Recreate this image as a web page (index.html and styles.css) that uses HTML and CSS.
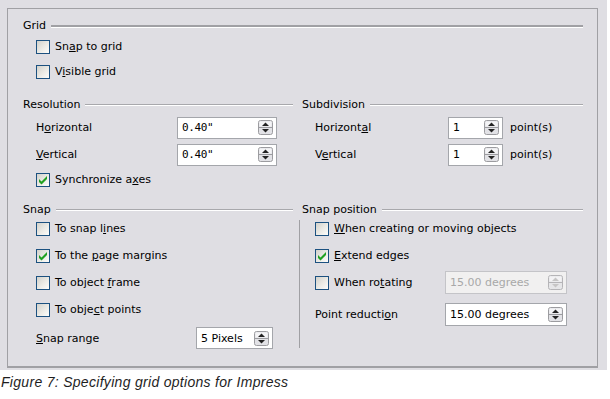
FILE: index.html
```html
<!DOCTYPE html>
<html lang="en">
<head>
  <meta charset="UTF-8">
  <title>Grid options</title>
  <link rel="stylesheet" href="styles.css">
</head>
<body>

  <!-- shared glyphs -->
  <svg class="defs" width="0" height="0">
    <symbol id="spin" viewBox="0 0 15 15">
      <rect x="0.5" y="0.5" width="14" height="14" rx="2" fill="#e2e2e6" stroke="#9c9ca0"/>
      <rect x="1.5" y="1.5" width="12" height="5" fill="#f4f4f6"/>
      <line x1="1" y1="7.5" x2="14" y2="7.5" stroke="#9c9ca0"/>
      <path d="M4 6 L7.5 2.5 L11 6 Z" fill="currentColor"/>
      <path d="M4 9 L7.5 12.5 L11 9 Z" fill="currentColor"/>
    </symbol>
    <symbol id="tick" viewBox="0 0 12 12">
      <path d="M2 5 L4.5 7.5 L10 2 L10 5 L4.5 10.5 L2 8 Z" fill="#21a121"/>
    </symbol>
  </svg>

  <div class="dialog">
    <div class="frame">

      <!-- Grid -->
      <section class="group">
        <div class="group-title heavy"><span>Grid</span></div>
        <div class="rows grid-rows">
          <div class="check-row short"><span class="box"></span><span>Sn<u>a</u>p to grid</span></div>
          <div class="check-row short"><span class="box"></span><span>V<u>i</u>sible grid</span></div>
        </div>
      </section>

      <!-- Resolution / Subdivision -->
      <div class="cols res-cols">
        <section class="col left">
          <div class="group-title"><span>Resolution</span></div>
          <div class="rows">
            <div class="field-row">
              <span class="label res-label">H<u>o</u>rizontal</span>
              <div class="spin-field w100"><span class="value mono">0.40"</span><svg class="spin"><use href="#spin"/></svg></div>
            </div>
            <div class="field-row">
              <span class="label res-label"><u>V</u>ertical</span>
              <div class="spin-field w100"><span class="value mono">0.40"</span><svg class="spin"><use href="#spin"/></svg></div>
            </div>
            <div class="check-row sync"><span class="box checked"><svg><use href="#tick"/></svg></span><span>Synchronize a<u>x</u>es</span></div>
          </div>
        </section>

        <section class="col right">
          <div class="group-title"><span>Subdivision</span></div>
          <div class="rows">
            <div class="field-row">
              <span class="label sub-label">Horizont<u>a</u>l</span>
              <div class="spin-field w55"><span class="value">1</span><svg class="spin"><use href="#spin"/></svg></div>
              <span class="unit">point(s)</span>
            </div>
            <div class="field-row">
              <span class="label sub-label">V<u>e</u>rtical</span>
              <div class="spin-field w55"><span class="value">1</span><svg class="spin"><use href="#spin"/></svg></div>
              <span class="unit">point(s)</span>
            </div>
          </div>
        </section>
      </div>

      <!-- Snap / Snap position -->
      <div class="cols snap-cols">
        <section class="col left">
          <div class="group-title"><span>Snap</span></div>
          <div class="rows">
            <div class="check-row"><span class="box"></span><span>To snap l<u>i</u>nes</span></div>
            <div class="check-row"><span class="box checked"><svg><use href="#tick"/></svg></span><span>To the <u>p</u>age margins</span></div>
            <div class="check-row"><span class="box"></span><span>To object <u>f</u>rame</span></div>
            <div class="check-row"><span class="box"></span><span>To obje<u>c</u>t points</span></div>
            <div class="field-row range">
              <span class="label range-label"><u>S</u>nap range</span>
              <div class="spin-field w77"><span class="value">5 Pixels</span><svg class="spin"><use href="#spin"/></svg></div>
            </div>
          </div>
        </section>

        <section class="col right">
          <div class="group-title"><span>Snap position</span></div>
          <div class="rows pos-body">
            <div class="check-row"><span class="box"></span><span><u>W</u>hen creating or moving objects</span></div>
            <div class="check-row"><span class="box checked"><svg><use href="#tick"/></svg></span><span><u>E</u>xtend edges</span></div>
            <div class="check-row">
              <span class="box"></span><span>When ro<u>t</u>ating</span>
              <div class="spin-field w122 disabled"><span class="value">15.00 degrees</span><svg class="spin"><use href="#spin"/></svg></div>
            </div>
            <div class="field-row reduction">
              <span class="label">Point reducti<u>o</u>n</span>
              <div class="spin-field w122"><span class="value">15.00 degrees</span><svg class="spin"><use href="#spin"/></svg></div>
            </div>
          </div>
        </section>
      </div>

    </div>
  </div>

  <p class="caption">Figure 7: Specifying grid options for Impress</p>

</body>
</html>
```

FILE: styles.css
```css
body {
  margin: 0;
  background-color: #fff;
  font-family: "DejaVu Sans", Verdana, sans-serif;
  font-size: 11px;
  color: #000;
}
.defs {
  position: absolute;
}
u {
  text-decoration: underline;
  text-underline-offset: 1px;
}

.dialog {
  width: 607px;
  height: 370px;
  box-sizing: border-box;
  padding: 8px 0 0 7px;
  background-color: #dfdee3;
}
.frame {
  width: 591px;
  height: 360px;
  box-sizing: border-box;
  border: 1px solid #a0a0a4;
  border-bottom-width: 2px;
  padding: 12px 14px 0 15px;
}

/* group headings with etched line */
.group-title {
  display: flex;
  align-items: center;
  gap: 5px;
  height: 10px;
  line-height: 10px;
  white-space: nowrap;
}
.group-title::after {
  content: "";
  flex: 1;
  height: 1px;
  background-color: #a8a8ac;
  border-bottom: 1px solid #fff;
}
.group-title.heavy::after {
  height: 2px;
  background-color: #a0a0a4;
}

.cols {
  display: flex;
  gap: 6px;
}
.col.left {
  width: 270px;
}
.col.right {
  width: 284px;
}
.col.right .group-title {
  padding-left: 3px;
}
.res-cols {
  margin-top: 16px;
}
.snap-cols {
  margin-top: 14px;
}

.rows {
  display: flex;
  flex-direction: column;
}
.grid-rows {
  margin-top: 3px;
}
.res-cols .rows {
  margin-top: 4px;
}

.check-row, .field-row {
  display: flex;
  align-items: center;
  height: 27px;
  padding-left: 13px;
  white-space: nowrap;
}
.check-row {
  gap: 5px;
}
.check-row.short {
  height: 25px;
}
.check-row.sync {
  height: 23px;
}
.col.right .check-row, .col.right .field-row {
  padding-left: 16px;
  padding-right: 16px;
}

.box {
  width: 14px;
  height: 14px;
  box-sizing: border-box;
  border: 1px solid #1c5180;
  background: linear-gradient(135deg, #d2d1cb 0%, #ecebe6 55%, #fdfdfb 100%);
  flex: none;
}
.box svg {
  display: block;
  width: 12px;
  height: 12px;
}

.res-label {
  width: 141px;
}
.sub-label {
  width: 133px;
}
.range-label {
  width: 160px;
}
.label {
  flex: none;
}
.unit {
  margin-left: 7px;
}

.spin-field {
  display: flex;
  align-items: center;
  justify-content: space-between;
  height: 22px;
  box-sizing: border-box;
  border: 1px solid #a4a6ab;
  background-color: #fff;
  padding: 0 3px 0 4px;
  flex: none;
  color: #000;
}
.spin {
  width: 15px;
  height: 15px;
  color: #222;
}
.value.mono {
  font-family: "DejaVu Sans Mono", monospace;
  letter-spacing: -0.4px;
}
.w100 { width: 100px; }
.w55 { width: 55px; }
.w77 { width: 77px; }
.w122 {
  width: 122px;
  height: 23px;
  margin-left: auto;
}
.field-row.range {
  height: 30px;
}
.field-row.reduction {
  margin-top: 5px;
}

.spin-field.disabled {
  background-color: #f1f0f0;
  border-color: #c4c4c8;
  color: #a8a8a8;
}
.spin-field.disabled .spin {
  color: #b4b4b4;
  opacity: 0.7;
}

/* vertical divider of the snap position block */
.pos-body {
  height: 133px;
  background: linear-gradient(#a0a0a4, #a0a0a4) no-repeat 0 5px / 1px calc(100% - 5px);
}

.caption {
  margin: 0;
  padding: 4px 0 0 1px;
  font-family: "Liberation Sans", Arial, sans-serif;
  font-style: italic;
  font-size: 14px;
  line-height: 16px;
  letter-spacing: 0.3px;
  color: #1e1e1e;
}
```
